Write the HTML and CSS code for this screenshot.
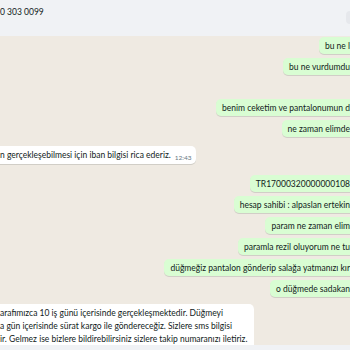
FILE: index.html
```html
<!DOCTYPE html>
<html lang="tr">
<head>
<meta charset="utf-8">
<title>Sohbet</title>
<link rel="stylesheet" href="styles.css">
</head>
<body>
<div class="app">
  <header class="topbar">
    <span class="contact">0 303 0099</span>
    <span class="topbar-icon"></span>
  </header>
  <main class="chat">
    <div class="msg out">
      <div class="bubble">bu ne l<span class="meta"><span class="time">12:40</span><svg class="ticks" viewBox="0 0 16 11"><path d="M1 6l3 3 6-7M6 9l1 0 6-7" fill="none" stroke="#53bdeb" stroke-width="1.4"/></svg></span></div>
    </div>
    <div class="msg out">
      <div class="bubble">bu ne vurdumdu<span class="meta"><span class="time">12:40</span><svg class="ticks" viewBox="0 0 16 11"><path d="M1 6l3 3 6-7M6 9l1 0 6-7" fill="none" stroke="#53bdeb" stroke-width="1.4"/></svg></span></div>
    </div>
    <div class="msg out group">
      <div class="bubble">benim ceketim ve pantalonumun d<span class="meta"><span class="time">12:41</span><svg class="ticks" viewBox="0 0 16 11"><path d="M1 6l3 3 6-7M6 9l1 0 6-7" fill="none" stroke="#53bdeb" stroke-width="1.4"/></svg></span></div>
    </div>
    <div class="msg out">
      <div class="bubble">ne zaman elimde<span class="meta"><span class="time">12:41</span><svg class="ticks" viewBox="0 0 16 11"><path d="M1 6l3 3 6-7M6 9l1 0 6-7" fill="none" stroke="#53bdeb" stroke-width="1.4"/></svg></span></div>
    </div>
    <div class="msg in first-in">
      <div class="bubble">n gerçekleşebilmesi için iban bilgisi rica ederiz.<span class="time">12:43</span></div>
    </div>
    <div class="msg out after-in">
      <div class="bubble">TR17000320000000108<span class="meta"><span class="time">12:44</span><svg class="ticks" viewBox="0 0 16 11"><path d="M1 6l3 3 6-7M6 9l1 0 6-7" fill="none" stroke="#53bdeb" stroke-width="1.4"/></svg></span></div>
    </div>
    <div class="msg out">
      <div class="bubble">hesap sahibi : alpaslan ertekin<span class="meta"><span class="time">12:44</span><svg class="ticks" viewBox="0 0 16 11"><path d="M1 6l3 3 6-7M6 9l1 0 6-7" fill="none" stroke="#53bdeb" stroke-width="1.4"/></svg></span></div>
    </div>
    <div class="msg out">
      <div class="bubble">param ne zaman elim<span class="meta"><span class="time">12:45</span><svg class="ticks" viewBox="0 0 16 11"><path d="M1 6l3 3 6-7M6 9l1 0 6-7" fill="none" stroke="#53bdeb" stroke-width="1.4"/></svg></span></div>
    </div>
    <div class="msg out">
      <div class="bubble">paramla rezil oluyorum ne tu<span class="meta"><span class="time">12:45</span><svg class="ticks" viewBox="0 0 16 11"><path d="M1 6l3 3 6-7M6 9l1 0 6-7" fill="none" stroke="#53bdeb" stroke-width="1.4"/></svg></span></div>
    </div>
    <div class="msg out">
      <div class="bubble">düğmeğiz pantalon gönderip salağa yatmanızı kır<span class="meta"><span class="time">12:46</span><svg class="ticks" viewBox="0 0 16 11"><path d="M1 6l3 3 6-7M6 9l1 0 6-7" fill="none" stroke="#53bdeb" stroke-width="1.4"/></svg></span></div>
    </div>
    <div class="msg out">
      <div class="bubble">o düğmede sadakan<span class="meta"><span class="time">12:46</span><svg class="ticks" viewBox="0 0 16 11"><path d="M1 6l3 3 6-7M6 9l1 0 6-7" fill="none" stroke="#53bdeb" stroke-width="1.4"/></svg></span></div>
    </div>
    <div class="msg in last-in">
      <div class="bubble multi">arafımızca 10 iş günü içerisinde gerçekleşmektedir. Düğmeyi<br>a gün içerisinde sürat kargo ile göndereceğiz. Sizlere sms bilgisi<br>ir. Gelmez ise bizlere bildirebilirsiniz sizlere takip numaranızı iletiriz.</div>
    </div>
  </main>
  <footer class="composer"></footer>
</div>
</body>
</html>
```
FILE: styles.css
```css
html, body {
  margin: 0;
  padding: 0;
  width: 350px;
  height: 350px;
  overflow: hidden;
  background: #efeae2;
}

body {
  font-family: "Lato", "Open Sans", sans-serif;
  color: #111b21;
}

.app {
  display: flex;
  flex-direction: column;
  height: 350px;
  overflow: hidden;
}

.topbar {
  flex: 0 0 36px;
  box-sizing: border-box;
  background: #f0f2f5;
  display: flex;
  justify-content: space-between;
  align-items: flex-start;
  padding-top: 6px;
}

.contact {
  font-size: 8.5px;
  line-height: 12px;
  color: #111b21;
}

.topbar-icon {
  width: 8px;
  height: 13px;
  margin-top: 5px;
  margin-right: -4px;
  border-radius: 4px;
  background: #e6e8ec;
}

.chat {
  flex: 1 1 auto;
  min-height: 0;
  overflow: hidden;
  margin: 0 -44px 0 -16px;
  padding-top: 1px;
  display: flex;
  flex-direction: column;
  gap: 4px;
}

.msg {
  display: flex;
  flex: 0 0 auto;
}

.msg.out {
  justify-content: flex-end;
}

.msg.in {
  justify-content: flex-start;
}

.msg.group {
  margin-top: 20px;
}

.msg.first-in {
  margin-top: 5px;
}

.msg.after-in {
  margin-top: 7px;
}

.msg.last-in {
  margin-top: 3px;
}

.bubble {
  font-size: 8.5px;
  line-height: 12px;
  white-space: nowrap;
  border-radius: 5px;
  box-shadow: 0 1px 0.5px rgba(11, 20, 26, 0.13);
  display: flex;
  align-items: flex-start;
}

.out .bubble {
  background: #d9fdd3;
  padding: 3px 6px 2px 6px;
}

.in .bubble {
  background: #ffffff;
  padding: 3px 4px 2px 16px;
}

.in .bubble.multi {
  display: block;
  line-height: 13px;
  padding: 3px 7px 4px 16px;
}

.meta {
  display: inline-flex;
  align-items: center;
  width: 34px;
  margin-left: 4px;
  height: 12px;
}

.time {
  font-size: 6.5px;
  line-height: 8px;
  color: #667781;
}

.in .time {
  margin-left: 4px;
  margin-top: 5px;
}

.ticks {
  width: 11px;
  height: 8px;
  margin-left: 3px;
}

.composer {
  flex: 0 0 5px;
  background: #f0f2f5;
}
```
